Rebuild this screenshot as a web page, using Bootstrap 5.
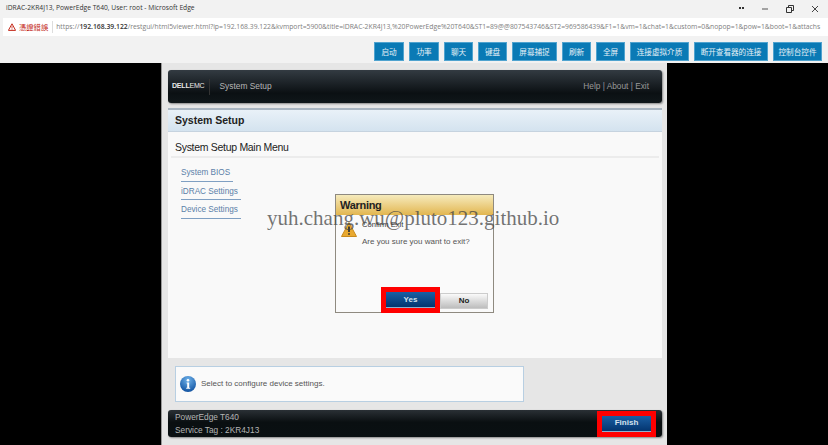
<!DOCTYPE html>
<html lang="en">
<head>
  <meta charset="UTF-8">
  <title>iDRAC Viewer</title>
  <link href="https://cdn.jsdelivr.net/npm/bootstrap@5.3.5/dist/css/bootstrap.min.css" rel="stylesheet">
  <style>
    html, body { height: 445px; overflow: hidden; }
    body { background: #000; font-family: "Liberation Sans", "Noto Sans CJK SC", sans-serif; font-size: 9px; color: #333; position: relative; }
    .win-title { height: 17px; background: #f2f2f2; padding: 0 0 0 6px; font-family: "Open Sans", "Liberation Sans", sans-serif; font-size: 6.7px; color: #333; }
    .win-ctrls { gap: 17px; padding-right: 9px; }
    .addr-wrap { height: 20px; background: #f2f2f2; padding: 1px 0 1px 3px; }
    .addr-box { height: 18px; background: #fff; white-space: nowrap; overflow: hidden; font-family: "Open Sans", "Liberation Sans", sans-serif; font-size: 6.8px; color: #808080; }
    .addr-warn { color: #c42b1c; padding: 0 4px 0 5px; border-right: 1px solid #ddd; height: 12px; gap: 3px; font-family: "Noto Sans CJK TC", sans-serif; font-size: 7.3px; flex-shrink: 0; margin-right: 3px; }
    .addr-box b { color: #333; font-weight: 600; }
    .tool-row { height: 26px; background: #f2f2f2; gap: 5px; padding: 5px 6px 3px 0; }
    .tool-btn { height: 19px; background: #0a7ab5; border: 1px solid #4fa3cf; color: #e6f1f7; font-family: "Noto Sans CJK SC", sans-serif; font-size: 7.6px; border-radius: 0; padding: 0; width: var(--w); }
    .w-30 { --w: 30px; } .w-29 { --w: 29px; } .w-45 { --w: 45px; } .w-59 { --w: 59px; } .w-74 { --w: 74px; } .w-49 { --w: 49px; }
    .setup-panel { width: 506px; height: 382px; margin: 0 auto; background: #e6e6e6; padding: 7px 5px 0 6px; border-left: 1px solid #999; }
    .dark-bar { background: linear-gradient(#333b42, #0b1013 70%, #10171a); color: #b5b5b5; border-radius: 3px; box-shadow: 1px 1px 2px #888; }
    .head-bar { height: 33px; padding: 0 13px 0 4px; font-size: 8.4px; }
    .dell-logo { color: #e8e8e8; font-size: 7px; padding-right: 5px; border-right: 1px solid #333; height: 16px; letter-spacing: -.2px; margin-right: 9px; }
    .head-links { color: #9a9a9a; font-size: 8.3px; }
    .main-area { height: 250px; margin-top: 5px; background: #f9f9f9; border-top: 2px solid #a9b6c2; }
    .area-title { height: 22px; background: linear-gradient(#e9f1f8, #d4e3ef); padding-left: 7px; font-size: 10.5px; font-weight: 700; color: #222; border-bottom: 1px solid #c6d3df; }
    .area-head { height: 26px; margin: 0 3px; padding: 8px 3px 0 4px; font-size: 10.5px; letter-spacing: -.3px; color: #222; border-bottom: 2px solid #ececec; }
    .menu-wrap { padding: 9px 0 0 13px; gap: 4px; }
    .menu-link { color: #5b7fa8; font-size: 8.2px; text-decoration: none; border-bottom: 1px solid #7f9fc2; padding: 0 3px 1px 0; line-height: 12.5px; display: block; }
    .help-box { width: 349px; height: 36px; margin: 8px 0 0 7px; background: #fafafa; border: 1px solid #b8cfe2; padding-left: 4px; gap: 5px; color: #555; font-size: 8px; }
    .foot-bar { height: 27px; margin-top: 8px; padding-left: 7px; font-size: 8.3px; line-height: 12.5px; background: linear-gradient(#2a3035, #0a0f11 45%, #0a1012); }
    .red-mark { border: 5px solid #f00; }
    .blue-btn { background: linear-gradient(#1a5fa5, #04356f); border: 0; border-bottom: 1px solid #8fb0cf; color: #d6e2ee; font-size: 8px; font-weight: 700; padding: 0; height: 16px; width: 49px; border-radius: 0; }
    .finish-mark { margin-right: 6px; }
    .warn-dialog { position: absolute; left: 335px; top: 194px; width: 159px; height: 119px; background: #fafafa; border: 1px solid #8f8a80; }
    .warn-head { height: 20px; background: linear-gradient(#f6ebbd, #e2b650); padding-left: 4px; font-size: 11px; font-weight: 700; color: #222; letter-spacing: -.3px; }
    .warn-title { position: absolute; left: 26px; top: 24px; font-size: 7.6px; color: #333; }
    .warn-text { position: absolute; left: 26px; top: 41px; font-size: 8px; color: #555; white-space: nowrap; }
    .warn-icon { position: absolute; left: 5px; top: 27px; }
    .warn-actions { position: absolute; left: 45px; top: 92px; }
    .no-btn { background: linear-gradient(#fafafa, #bdbdbd); border: 1px solid #ccc; color: #222; font-size: 8px; font-weight: 700; padding: 0; height: 16px; width: 48px; margin-top: 6px; border-radius: 0; }
    .mark-text { position: absolute; left: 267px; top: 206px; font-family: "Liberation Serif", serif; font-size: 21px; line-height: 24px; color: rgba(70, 70, 70, .75); white-space: nowrap; }
  </style>
</head>
<body>
  <div class="win-title d-flex align-items-center justify-content-between">
    <span>iDRAC-2KR4J13, PowerEdge T640, User: root - Microsoft Edge</span>
    <div class="win-ctrls d-flex align-items-center">
      <svg width="5" height="3"><path d="M0 1h2M3 1h2" stroke="#333" stroke-width="2"/></svg>
      <svg width="8" height="8"><path d="M1 4h6" stroke="#555"/></svg>
      <svg width="8" height="8"><path d="M.5 2.5h5v5h-5zM2.5 2V.5h5v5H6" fill="none" stroke="#333"/></svg>
      <svg width="8" height="8"><path d="M1 1l6 6M7 1l-6 6" stroke="#444"/></svg>
    </div>
  </div>
  <div class="addr-wrap">
    <div class="addr-box d-flex align-items-center">
      <span class="addr-warn d-flex align-items-center">
        <svg width="8" height="8" viewBox="0 0 8 8"><path d="M4 .8L7.6 7.4H.4z" fill="none" stroke="#c42b1c"/><path d="M4 3v2.4M4 5.8v.8" stroke="#c42b1c" stroke-width=".8"/></svg>
        憑證錯誤
      </span>
      <span>https://<b>192.168.39.122</b>/restgui/html5viewer.html?ip=192.168.39.122&amp;kvmport=5900&amp;title=iDRAC-2KR4J13,%20PowerEdge%20T640&amp;ST1=89@@807543746&amp;ST2=969586439&amp;F1=1&amp;vm=1&amp;chat=1&amp;custom=0&amp;nopop=1&amp;pow=1&amp;boot=1&amp;attachs</span>
    </div>
  </div>
  <div class="tool-row d-flex justify-content-end">
    <button class="btn tool-btn w-30">启动</button>
    <button class="btn tool-btn w-30">功率</button>
    <button class="btn tool-btn w-29">聊天</button>
    <button class="btn tool-btn w-29">键盘</button>
    <button class="btn tool-btn w-45">屏幕捕捉</button>
    <button class="btn tool-btn w-29">刷新</button>
    <button class="btn tool-btn w-29">全屏</button>
    <button class="btn tool-btn w-59">连接虚拟介质</button>
    <button class="btn tool-btn w-74">断开查看器的连接</button>
    <button class="btn tool-btn w-49">控制台控件</button>
  </div>

  <div class="setup-panel">
    <div class="dark-bar head-bar d-flex align-items-center">
      <span class="dell-logo d-flex align-items-center"><b>DELL</b>EMC</span>
      <span>System Setup</span>
      <span class="head-links ms-auto">Help | About | Exit</span>
    </div>
    <div class="main-area">
      <div class="area-title d-flex align-items-center">System Setup</div>
      <div class="area-head">System Setup Main Menu</div>
      <div class="menu-wrap d-flex flex-column align-items-start">
        <a class="menu-link" href="#">System BIOS</a>
        <a class="menu-link" href="#">iDRAC Settings</a>
        <a class="menu-link" href="#">Device Settings</a>
      </div>
    </div>
    <div class="help-box d-flex align-items-center">
      <svg width="16" height="16" viewBox="0 0 16 16"><defs><radialGradient id="infoFill" cx=".5" cy=".25" r=".8"><stop offset="0" stop-color="#6fb2ea"/><stop offset="1" stop-color="#0a4c9c"/></radialGradient></defs><circle cx="8" cy="8" r="8" fill="url(#infoFill)"/><circle cx="8" cy="4.2" r="1.3" fill="#fff"/><path d="M6.6 6.6h2.6v5.2h1v1H6.2v-1h1V7.6h-.6z" fill="#fff"/></svg>
      <span>Select to configure device settings.</span>
    </div>
    <div class="dark-bar foot-bar d-flex align-items-center justify-content-between">
      <div>PowerEdge T640<br>Service Tag : 2KR4J13</div>
      <div class="red-mark finish-mark d-flex"><button class="btn blue-btn">Finish</button></div>
    </div>
  </div>

  <div class="warn-dialog">
    <div class="warn-head d-flex align-items-center">Warning</div>
    <svg class="warn-icon" width="16" height="15" viewBox="0 0 16 15"><path d="M8 .5L15.5 14.5H.5z" fill="#e9a92f" stroke="#c98a1c" stroke-linejoin="round"/><path d="M8 4.5v5.5M8 11.2v1.6" stroke="#333" stroke-width="1.8"/></svg>
    <span class="warn-title">Confirm Exit</span>
    <span class="warn-text">Are you sure you want to exit?</span>
    <div class="warn-actions d-flex">
      <div class="red-mark d-flex"><button class="btn blue-btn">Yes</button></div>
      <button class="btn no-btn">No</button>
    </div>
  </div>

  <div class="mark-text">yuh.chang.wu@pluto123.github.io</div>

  <script src="https://cdn.jsdelivr.net/npm/bootstrap@5.3.5/dist/js/bootstrap.bundle.min.js"></script>
</body>
</html>
